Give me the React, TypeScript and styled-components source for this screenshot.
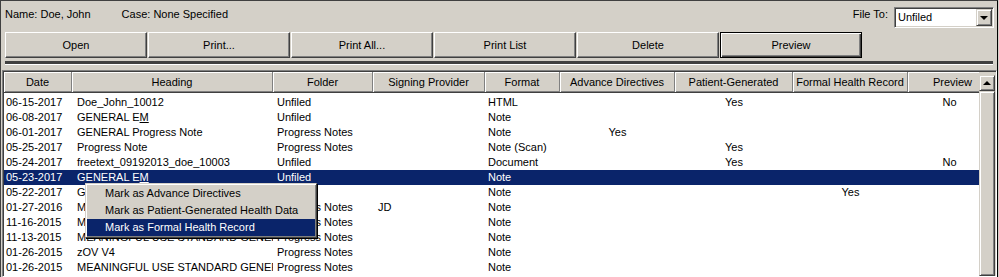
import React from "react";
import styled, { createGlobalStyle, css } from "styled-components";

const face = "#d4d0c8";
const shadow = "#808080";
const darkShadow = "#404040";
const selection = "#0a246a";

const GlobalStyle = createGlobalStyle`
    html, body {
        margin: 0;
        padding: 0;
        background: ${face};
    }
    body {
        font-family: "Liberation Sans", Arial, sans-serif;
        font-size: 11px;
        color: #000;
    }
`;

const raised = css`
    border: 1px solid;
    border-color: #fff ${darkShadow} ${darkShadow} #fff;
    box-shadow: inset -1px -1px ${shadow};
`;

const Window = styled.div`
    position: relative;
    box-sizing: border-box;
    width: 998px;
    height: 277px;
    background: ${face};
    border-top: 1px solid ${darkShadow};
    border-left: 1px solid ${darkShadow};
    border-right: 1px solid #000;
    display: flex;
    flex-direction: column;
    overflow: hidden;
`;

const InfoBar = styled.div`
    display: flex;
    justify-content: space-between;
    align-items: flex-start;
    height: 31px;
    padding: 0 3px 0 4px;
`;

const Fields = styled.div`
    display: flex;
    gap: 31px;
    margin-top: 7px;
    line-height: 13px;
`;

const FileTo = styled.div`
    display: flex;
    align-items: flex-start;
    gap: 6px;
`;

const Label = styled.span`
    margin-top: 7px;
    line-height: 13px;
`;

const Select = styled.div`
    box-sizing: border-box;
    display: flex;
    align-items: stretch;
    width: 100px;
    height: 21px;
    margin-top: 6px;
    background: #fff;
    border: 1px solid;
    border-color: ${shadow} #fff #fff ${shadow};
    box-shadow: inset 1px 1px ${darkShadow}, inset -1px -1px ${face};
    padding: 1px;
`;

const SelectValue = styled.span`
    flex: 1;
    padding-left: 2px;
    line-height: 17px;
`;

const ArrowButton = styled.span`
    ${raised};
    box-sizing: border-box;
    width: 16px;
    display: flex;
    align-items: center;
    justify-content: center;
    background: ${face};
    border-color: ${face} ${darkShadow} ${darkShadow} ${face};
    box-shadow: inset 1px 1px #fff, inset -1px -1px ${shadow};
`;

const Triangle = styled.span<{ $up?: boolean }>`
    width: 0;
    height: 0;
    border-left: 4px solid transparent;
    border-right: 4px solid transparent;
    ${(p) =>
        p.$up
            ? css`border-bottom: 4px solid #000;`
            : css`border-top: 4px solid #000;`}
`;

const Toolbar = styled.div`
    display: flex;
    gap: 1px;
    padding-left: 4px;
`;

const Button = styled.button<{ $default?: boolean }>`
    box-sizing: border-box;
    width: 142px;
    height: 26px;
    padding: 0;
    margin: 0;
    font: inherit;
    color: #000;
    background: ${face};
    ${raised};
    ${(p) =>
        p.$default &&
        css`
            border-color: #000;
            box-shadow: inset 1px 1px #fff, inset -1px -1px ${darkShadow},
                inset -2px -2px ${shadow};
        `}
`;

const Splitter = styled.div`
    height: 3px;
    margin: 3px 4px 0 4px;
    background: ${darkShadow};
    border-bottom: 1px solid #fff;
`;

const ListBox = styled.div`
    flex: 1;
    display: flex;
    margin: 5px 0 0 1px;
    border: 1px solid;
    border-color: ${shadow} #fff #fff ${shadow};
    box-shadow: inset 1px 1px ${darkShadow}, inset -1px -1px ${face};
    padding: 1px 1px 0 1px;
    min-height: 0;
`;

const Grid = styled.div`
    flex: 1;
    background: #fff;
    display: flex;
    flex-direction: column;
    min-width: 0;
`;

const HeaderRow = styled.div<{ $cols: string }>`
    display: grid;
    grid-template-columns: ${(p) => p.$cols};
    height: 20px;
    background: ${face};
    border-bottom: 1px solid ${darkShadow};
`;

const HeaderCell = styled.div<{ $shift?: number }>`
    box-sizing: border-box;
    text-align: center;
    padding-top: 2px;
    padding-left: ${(p) => p.$shift ?? 0}px;
    line-height: 17px;
    white-space: nowrap;
    overflow: hidden;
    border-right: 1px solid ${shadow};
    box-shadow: inset 1px 1px #fff, inset 0 -1px ${shadow};

    &:last-child {
        border-right: none;
    }
`;

const Rows = styled.div`
    padding-top: 2px;
`;

const Row = styled.div<{ $cols: string; $selected?: boolean }>`
    display: grid;
    grid-template-columns: ${(p) => p.$cols};
    height: 15px;
    line-height: 15px;
    ${(p) =>
        p.$selected &&
        css`
            background: ${selection};
            color: #fff;
        `}
`;

const Cell = styled.div<{ $align: string; $pad: number }>`
    text-align: ${(p) => p.$align};
    padding-left: ${(p) => p.$pad}px;
    white-space: nowrap;
    overflow: hidden;
`;

const ScrollBar = styled.div`
    width: 16px;
    display: flex;
    flex-direction: column;
    background: ${face};
    padding-top: 3px;
`;

const ScrollButton = styled.div`
    box-sizing: border-box;
    height: 16px;
    display: flex;
    align-items: center;
    justify-content: center;
    border: 1px solid;
    border-color: ${face} ${darkShadow} ${darkShadow} ${face};
    box-shadow: inset 1px 1px #fff, inset -1px -1px ${shadow};
`;

const Thumb = styled.div`
    flex: 1;
    border: 1px solid;
    border-color: ${face} ${darkShadow} ${darkShadow} ${face};
    box-shadow: inset 1px 1px #fff, inset -1px -1px ${shadow};
`;

const Menu = styled.div`
    position: absolute;
    left: 84px;
    top: 182px;
    width: 232px;
    box-sizing: border-box;
    padding: 1px;
    background: ${face};
    border: 1px solid;
    border-color: ${face} ${darkShadow} ${darkShadow} ${face};
    box-shadow: inset 1px 1px #fff, inset -1px -1px ${shadow}, 1px 1px 0 #000;
`;

const MenuItem = styled.div<{ $active?: boolean }>`
    height: 17px;
    line-height: 17px;
    padding-left: 18px;
    white-space: nowrap;
    ${(p) =>
        p.$active &&
        css`
            background: ${selection};
            color: #fff;
        `}
`;

type Align = "left" | "center";

interface Column {
    key: string;
    title: string;
    width: number;
    align: Align;
    pad: number;
    headShift?: number;
}

const columns: Column[] = [
    { key: "date", title: "Date", width: 68, align: "left", pad: 2 },
    { key: "heading", title: "Heading", width: 201, align: "left", pad: 5 },
    { key: "folder", title: "Folder", width: 100, align: "left", pad: 4 },
    { key: "signer", title: "Signing Provider", width: 112, align: "left", pad: 5 },
    { key: "format", title: "Format", width: 75, align: "left", pad: 3 },
    { key: "advance", title: "Advance Directives", width: 115, align: "center", pad: 0 },
    { key: "patient", title: "Patient-Generated", width: 118, align: "center", pad: 0 },
    { key: "formal", title: "Formal Health Record", width: 115, align: "center", pad: 0 },
    { key: "preview", title: "Preview", width: 71, align: "center", pad: 12, headShift: 18 },
];

const gridCols = columns.map((c) => `${c.width}px`).join(" ");

const EM = (
    <>
        GENERAL E<u>M</u>
    </>
);

// the list clips long headings at the column edge
const MU = "MEANINGFUL USE STANDARD GENERA";

type Doc = Record<string, React.ReactNode> & { selected?: boolean };

const docs: Doc[] = [
    { date: "06-15-2017", heading: "Doe_John_10012", folder: "Unfiled", format: "HTML", patient: "Yes", preview: "No" },
    { date: "06-08-2017", heading: EM, folder: "Unfiled", format: "Note" },
    { date: "06-01-2017", heading: "GENERAL Progress Note", folder: "Progress Notes", format: "Note", advance: "Yes" },
    { date: "05-25-2017", heading: "Progress Note", folder: "Progress Notes", format: "Note (Scan)", patient: "Yes" },
    { date: "05-24-2017", heading: "freetext_09192013_doe_10003", folder: "Unfiled", format: "Document", patient: "Yes", preview: "No" },
    { date: "05-23-2017", heading: EM, folder: "Unfiled", format: "Note", selected: true },
    { date: "05-22-2017", heading: "GENERAL", folder: "Unfiled", format: "Note", formal: "Yes" },
    { date: "01-27-2016", heading: MU, folder: "Progress Notes", signer: "JD", format: "Note" },
    { date: "11-16-2015", heading: MU, folder: "Progress Notes", format: "Note" },
    { date: "11-13-2015", heading: MU, folder: "Progress Notes", format: "Note" },
    { date: "01-26-2015", heading: "zOV V4", folder: "Progress Notes", format: "Note" },
    { date: "01-26-2015", heading: MU, folder: "Progress Notes", format: "Note" },
];

const buttons = ["Open", "Print...", "Print All...", "Print List", "Delete", "Preview"];

const menuItems = [
    "Mark as Advance Directives",
    "Mark as Patient-Generated Health Data",
    "Mark as Formal Health Record",
];

const App = (): JSX.Element => (
    <>
        <GlobalStyle />
        <Window>
            <InfoBar>
                <Fields>
                    <span>Name: Doe, John</span>
                    <span>Case: None Specified</span>
                </Fields>
                <FileTo>
                    <Label>File To:</Label>
                    <Select>
                        <SelectValue>Unfiled</SelectValue>
                        <ArrowButton>
                            <Triangle />
                        </ArrowButton>
                    </Select>
                </FileTo>
            </InfoBar>
            <Toolbar>
                {buttons.map((b) => (
                    <Button key={b} $default={b === "Preview"}>
                        {b}
                    </Button>
                ))}
            </Toolbar>
            <Splitter />
            <ListBox>
                <Grid>
                    <HeaderRow $cols={gridCols}>
                        {columns.map((c) => (
                            <HeaderCell key={c.key} $shift={c.headShift}>
                                {c.title}
                            </HeaderCell>
                        ))}
                    </HeaderRow>
                    <Rows>
                        {docs.map((d, i) => (
                            <Row key={i} $cols={gridCols} $selected={d.selected}>
                                {columns.map((c) => (
                                    <Cell key={c.key} $align={c.align} $pad={c.pad}>
                                        {d[c.key]}
                                    </Cell>
                                ))}
                            </Row>
                        ))}
                    </Rows>
                </Grid>
                <ScrollBar>
                    <ScrollButton>
                        <Triangle $up />
                    </ScrollButton>
                    <Thumb />
                </ScrollBar>
            </ListBox>
            <Menu>
                {menuItems.map((m, i) => (
                    <MenuItem key={m} $active={i === menuItems.length - 1}>
                        {m}
                    </MenuItem>
                ))}
            </Menu>
        </Window>
    </>
);

export default App;
